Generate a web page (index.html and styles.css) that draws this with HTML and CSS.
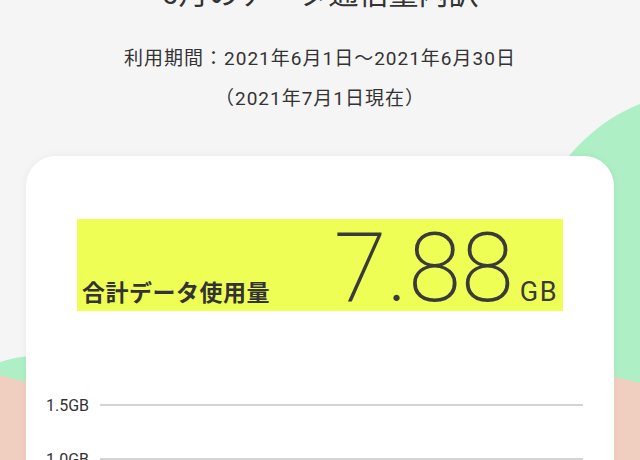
FILE: index.html
```html
<!DOCTYPE html>
<html lang="ja">
<head>
    <meta charset="UTF-8">
    <meta name="viewport" content="width=device-width, initial-scale=1.0">
    <title>6月のデータ通信量内訳</title>
    <link rel="stylesheet" href="styles.css">
</head>
<body>
    <!-- decorative background shapes -->
    <svg class="bg-shapes" width="640" height="460" viewBox="0 0 640 460">
        <path fill="#aeefc5" d="M540 200 C562 156 598 120 640 104 L640 460 L0 460 L0 362 C10 359 18 357 30 356 L540 356 Z"/>
        <path fill="#f1cfc0" d="M0 375 C10 378 20 381 30 383 L600 372 C612 376 626 380 640 383 L640 460 L0 460 Z"/>
    </svg>

    <div class="page">
        <div class="header">
            <h1 class="title">6月のデータ通信量内訳</h1>
            <p class="period">利用期間：2021年6月1日〜2021年6月30日</p>
            <p class="period">（2021年7月1日現在）</p>
        </div>

        <div class="card">
            <div class="total">
                <span class="total-label">合計データ使用量</span>
                <span class="total-value">7.88<span class="unit">GB</span></span>
            </div>

            <div class="chart">
                <div class="chart-row">
                    <span class="axis-label">1.5GB</span>
                    <span class="grid-line"></span>
                </div>
                <div class="chart-row">
                    <span class="axis-label">1.0GB</span>
                    <span class="grid-line"></span>
                </div>
                <div class="chart-row">
                    <span class="axis-label">0.5GB</span>
                    <span class="grid-line"></span>
                </div>
            </div>
        </div>
    </div>
</body>
</html>
```

FILE: styles.css
```css
body {
    margin: 0;
    height: 460px;
    overflow: hidden;
    position: relative;
    background: #f5f5f5;
    color: #333;
    font-family: Roboto, "Noto Sans CJK JP", sans-serif;
}

.bg-shapes {
    position: absolute;
    top: 0;
    left: 0;
    z-index: 0;
}

.page {
    position: relative;
    z-index: 1;
}

/* page is scrolled a bit, title is cut off at the top */
.header {
    text-align: center;
    margin-top: -26px;
}

.title {
    margin: 0 0 25px;
    font-size: 30px;
    line-height: 40px;
    font-weight: 400;
}

.period {
    margin: 0;
    font-size: 19px;
    line-height: 40px;
    letter-spacing: 1px;
}

.card {
    margin: 37px 26px 0;
    padding: 63px 51px 0;
    height: 400px;
    background: #fff;
    border-radius: 30px;
    box-shadow: 0 0 8px rgba(0, 0, 0, 0.05);
}

.total {
    display: flex;
    justify-content: space-between;
    align-items: baseline;
    height: 92px;
    padding: 1px 5px 0 5px;
    box-sizing: border-box;
    background: #eefe55;
}

.total-label {
    font-size: 23px;
    font-weight: 700;
    letter-spacing: 0.5px;
}

.total-value {
    font-size: 96px;
    line-height: 1;
    font-weight: 200;
    color: #3a3a3a;
}

.unit {
    font-size: 27px;
    font-weight: 400;
    letter-spacing: 1.5px;
    margin-left: 6px;
}

.chart {
    margin: 67px -20px 0 -31px;
}

.chart-row {
    display: flex;
    align-items: center;
    height: 54px;
    gap: 11px;
}

.axis-label {
    font-size: 16px;
    color: #333;
}

.grid-line {
    flex: 1;
    height: 2px;
    background: #d4d4d4;
}
```
